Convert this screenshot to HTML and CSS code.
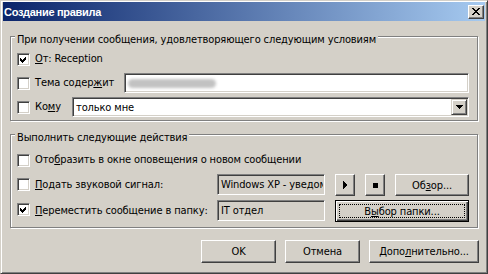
FILE: index.html
```html
<!DOCTYPE html>
<html lang="ru">
<head>
<meta charset="utf-8">
<title>Создание правила</title>
<link rel="stylesheet" href="styles.css">
</head>
<body>
<div class="window">
  <div class="titlebar">
    <span class="title">Создание правила</span>
    <span class="close-btn"><svg width="8" height="7" viewBox="0 0 8 7"><path d="M0 0h2v1H0zM6 0h2v1H6zM1 1h2v1H1zM5 1h2v1H5zM2 2h4v1H2zM3 3h2v1H3zM2 4h4v1H2zM1 5h2v1H1zM5 5h2v1H5zM0 6h2v1H0zM6 6h2v1H6z"/></svg></span>
  </div>
  <div class="content">
    <div class="group g1">
      <div class="legend">При получении сообщения, удовлетворяющего следующим условиям</div>
      <div class="row first">
        <span class="cb"><svg width="13" height="13" viewBox="0 0 13 13"><polygon points="3,5 5,7 9,3 9,6 5,10 3,8"/></svg></span>
        <span class="lbl"><u>О</u>т: Reception</span>
      </div>
      <div class="row">
        <span class="cb"></span>
        <span class="lbl w-subj">Тема содер<u>ж</u>ит</span>
        <div class="edit fill"><span class="smudge"></span></div>
      </div>
      <div class="row">
        <span class="cb"></span>
        <span class="lbl w-to">Ко<u>м</u>у</span>
        <div class="edit fill combo">
          <span class="edit-text">только мне</span>
          <span class="dd-btn"><svg width="7" height="4" viewBox="0 0 7 4"><path d="M0 0h7v1H0zM1 1h5v1H1zM2 2h3v1H2zM3 3h1v1H3z"/></svg></span>
        </div>
      </div>
    </div>

    <div class="group g2">
      <div class="legend">Выполнить следующие действия</div>
      <div class="row first">
        <span class="cb"></span>
        <span class="lbl">Ото<u>б</u>разить в окне оповещения о новом сообщении</span>
      </div>
      <div class="row tall">
        <span class="cb"></span>
        <span class="lbl w-act"><u>П</u>одать звуковой сигнал:</span>
        <div class="edit ro"><span class="edit-text clip">Windows XP - уведом</span></div>
        <span class="btn sq"><svg width="4" height="8" viewBox="0 0 4 8"><path d="M0 0h1v8H0zM1 1h1v6H1zM2 2h1v4H2zM3 3h1v2H3z"/></svg></span>
        <span class="btn sq"><svg width="5" height="5" viewBox="0 0 5 5"><rect width="5" height="5"/></svg></span>
        <span class="btn browse">Об<u>з</u>ор...</span>
      </div>
      <div class="row tall">
        <span class="cb cb3"><svg width="13" height="13" viewBox="0 0 13 13"><polygon points="3,5 5,7 9,3 9,6 5,10 3,8"/></svg></span>
        <span class="lbl w-act"><u>П</u>ереместить сообщение в папку:</span>
        <div class="edit ro"><span class="edit-text">IT отдел</span></div>
        <span class="btn default folder"><span class="focus">В<u>ы</u>бор папки...</span></span>
      </div>
    </div>

    <div class="buttons">
      <span class="btn dlg">OK</span>
      <span class="btn dlg">Отмена</span>
      <span class="btn dlg wide">Допо<u>л</u>нительно...</span>
    </div>
  </div>
</div>
</body>
</html>
```
FILE: styles.css
```css
* { box-sizing: border-box; }
html, body { margin: 0; padding: 0; }
body {
  width: 488px;
  height: 274px;
  overflow: hidden;
  background: #d4d0c8;
  font-family: "DejaVu Sans Condensed", "DejaVu Sans", sans-serif;
  font-size: 11px;
  letter-spacing: -0.12px;
  color: #000;
}
u { text-decoration: underline; text-underline-offset: 1px; }

.window {
  width: 488px;
  height: 274px;
  background: #d4d0c8;
  border: 1px solid;
  border-color: #d4d0c8 #404040 #404040 #d4d0c8;
  box-shadow: inset 1px 1px #fff, inset -1px -1px #808080;
  padding: 1px 2px 0 2px;
}

.titlebar {
  height: 19px;
  display: flex;
  align-items: center;
  background: linear-gradient(to right, #0a246a, #a6caf0);
}
.title {
  flex: 1;
  color: #fff;
  font-family: "Liberation Sans", Arial, sans-serif;
  font-weight: bold;
  font-size: 11px;
  letter-spacing: -0.3px;
  padding-left: 1px;
  white-space: nowrap;
}
.close-btn {
  width: 16px;
  height: 14px;
  align-self: flex-start;
  margin: 3px 1px 0 0;
  padding: 2px 0 0 3px;
  background: #d4d0c8;
  border: 1px solid;
  border-color: #fff #404040 #404040 #fff;
  box-shadow: inset -1px -1px #808080, inset 1px 1px #d4d0c8;
  display: block;
}
.close-btn svg { display: block; }

.content { padding-left: 7px; }

.group {
  width: 468px;
  border: 1px solid #808080;
  box-shadow: inset 1px 1px #fff, 1px 1px #fff;
  padding: 0 8px 0 6px;
}
.g1 { margin-top: 15px; height: 85px; }
.g2 { margin-top: 13px; height: 94px; }

.legend {
  width: fit-content;
  margin: -4px 0 0 -2px;
  padding: 0 2px;
  line-height: 13px;
  background: #d4d0c8;
  white-space: nowrap;
}

.row {
  display: flex;
  align-items: flex-start;
  height: 20px;
  margin-top: 4px;
}
.g1 .row.first { margin-top: 3px; }
.g2 .row.first { margin-top: 6px; }
.row.tall { height: 22px; }

.cb {
  flex: none;
  width: 13px;
  height: 13px;
  margin-top: 4px;
  background: #fff;
  border: 1px solid;
  border-color: #808080 #fff #fff #808080;
  box-shadow: inset 1px 1px #404040, inset -1px -1px #d4d0c8;
}
.cb svg { display: block; margin: -1px 0 0 -1px; shape-rendering: crispEdges; }
.cb3 { margin-top: 3px; }

.lbl {
  flex: none;
  margin-left: 5px;
  line-height: 20px;
  white-space: nowrap;
}
.row.tall .lbl { line-height: 22px; }
.w-subj { width: 89px; }
.w-to { width: 37px; }
.w-act { width: 182px; }

.edit {
  height: 20px;
  background: #fff;
  border: 1px solid;
  border-color: #808080 #fff #fff #808080;
  box-shadow: inset 1px 1px #404040, inset -1px -1px #d4d0c8;
  display: flex;
  align-items: center;
  overflow: hidden;
}
.edit.fill { flex: 1; }
.edit.ro {
  flex: none;
  width: 108px;
  height: 21px;
  background: #d4d0c8;
}
.edit-text {
  flex: 1;
  padding-left: 3px;
  white-space: nowrap;
  overflow: hidden;
}
.edit-text.clip { flex: none; width: 105px; }
.smudge {
  width: 88px;
  height: 9px;
  margin-left: 3px;
  background: #c2c2c2;
  border-radius: 5px;
  filter: blur(1.5px);
}
.combo { align-items: stretch; }
.combo .edit-text { display: flex; align-items: center; }
.dd-btn {
  flex: none;
  width: 16px;
  margin: 1px 1px 1px 0;
  background: #d4d0c8;
  border: 1px solid;
  border-color: #d4d0c8 #404040 #404040 #d4d0c8;
  box-shadow: inset 1px 1px #fff, inset -1px -1px #808080;
  display: flex;
  align-items: center;
  justify-content: center;
}
.dd-btn svg { display: block; }

.btn {
  flex: none;
  height: 22px;
  background: #d4d0c8;
  border: 1px solid;
  border-color: #fff #404040 #404040 #fff;
  box-shadow: inset -1px -1px #808080, inset 1px 1px #d4d0c8;
  display: flex;
  align-items: center;
  justify-content: center;
  white-space: nowrap;
}
.btn svg { display: block; }
.sq { width: 20px; margin-left: 10px; }
.browse { width: 74px; margin-left: 10px; }
.folder { width: 134px; margin-left: 10px; }
.btn.default {
  border-color: #000;
  box-shadow: inset 1px 1px #fff, inset -1px -1px #404040, inset -2px -2px #808080;
  padding: 3px;
  align-items: stretch;
}
.focus {
  flex: 1;
  border: 1px dotted #000;
  display: flex;
  align-items: center;
  justify-content: center;
}

.buttons {
  width: 469px;
  margin-top: 12px;
  display: flex;
  justify-content: flex-end;
  gap: 9px;
}
.dlg { width: 75px; height: 23px; }
.dlg.wide { width: 110px; }
```
